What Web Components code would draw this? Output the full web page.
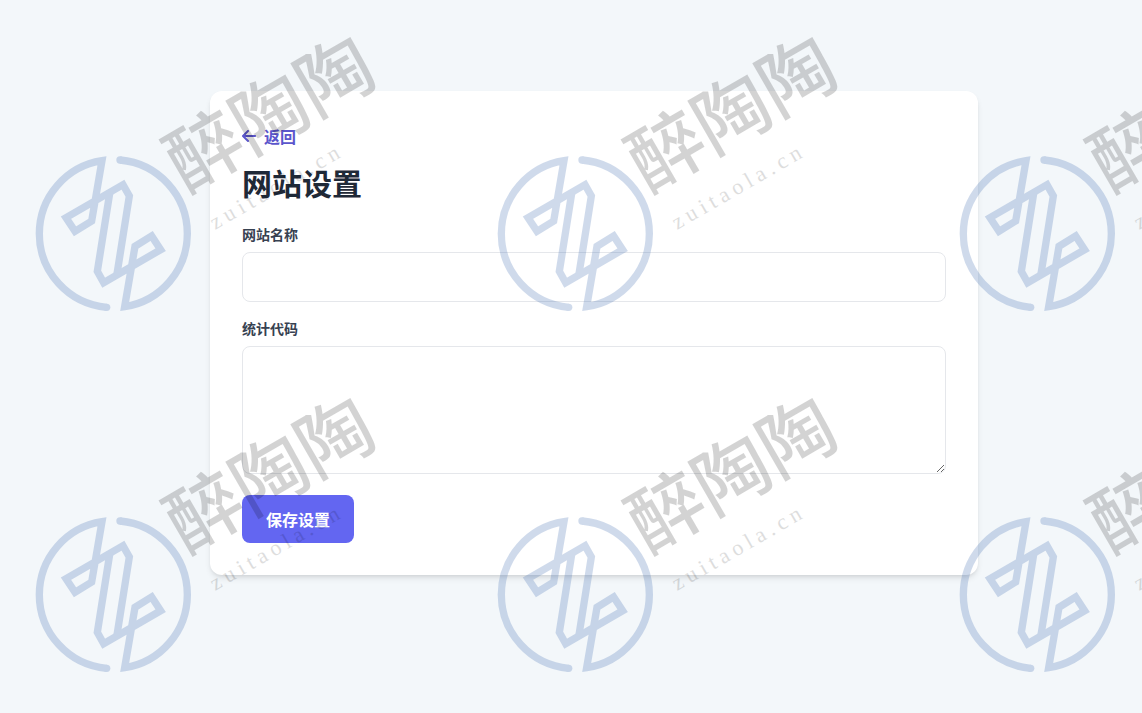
<!DOCTYPE html>
<html lang="zh-CN">
<head>
<meta charset="utf-8">
<meta name="viewport" content="width=device-width, initial-scale=1">
<title>网站设置</title>
<style>
  body { margin: 0; background: #f3f7fa; color: #1f2937; font: 16px/24px "Noto Sans CJK SC", sans-serif; }
</style>
</head>
<body>
<settings-page>
  <settings-card>
    <back-link>返回</back-link>
    <page-title>网站设置</page-title>
    <form-field label="网站名称" name="site-name"></form-field>
    <form-field label="统计代码" name="analytics" multiline></form-field>
    <primary-button>保存设置</primary-button>
  </settings-card>
  <watermark-layer slot="overlay" tiles="6"></watermark-layer>
</settings-page>

<script>
function define(name, html, setup) {
  const template = document.createElement('template');
  template.innerHTML = '<style>*{box-sizing:border-box}</style>' + html;
  customElements.define(name, class extends HTMLElement {
    constructor() {
      super();
      this.attachShadow({ mode: 'open' }).append(template.content.cloneNode(true));
    }
    connectedCallback() { if (setup) setup(this, this.shadowRoot); }
  });
}

define('settings-page', `
  <style>
    :host { display: block; position: relative; min-height: 100vh; overflow: hidden; box-sizing: border-box; }
    main { display: flex; justify-content: center; padding: 91px 0 48px 46px; }
  </style>
  <main><slot></slot></main><slot name="overlay"></slot>`);

define('settings-card', `
  <style>
    :host { display: block; box-sizing: border-box; width: 100%; max-width: 768px; padding: 32px;
      background: #fff; border-radius: 12px;
      box-shadow: 0 4px 6px -1px rgba(0,0,0,.1), 0 2px 4px -2px rgba(0,0,0,.1); }
  </style>
  <slot></slot>`);

define('back-link', `
  <style>
    :host { display: block; margin-bottom: 16px; }
    a { display: flex; align-items: center; gap: 8px; padding-top: 1px; color: #5b56cc; font-weight: 700; text-decoration: none; }
    svg { width: 14px; height: 16px; }
  </style>
  <a href="#"><svg viewBox="0 0 448 512" fill="currentColor" aria-hidden="true"><path d="M9.400 233.400c-12.500 12.500-12.500 32.800 0 45.300l160 160c12.500 12.500 32.800 12.500 45.300 0s12.500-32.800 0-45.300L109.200 288H416c17.700 0 32-14.300 32-32s-14.300-32-32-32H109.300l105.300-105.400c12.500-12.500 12.500-32.800 0-45.300s-32.800-12.500-45.300 0l-160 160z"/></svg><slot></slot></a>`);

define('page-title', `
  <style>
    :host { display: block; margin-bottom: 24px; }
    h1 { margin: 0; font-size: 30px; line-height: 36px; font-weight: 700; color: #1f2937; }
  </style>
  <h1><slot></slot></h1>`);

define('form-field', `
  <style>
    :host { display: block; margin-bottom: 16px; }
    label { display: block; margin-bottom: 8px; font-size: 14px; line-height: 20px; font-weight: 700; color: #374151; }
    input, textarea { display: block; width: 100%; margin: 0; padding: 12px; border: 1px solid #e5e7eb;
      border-radius: 8px; background: #fff; color: inherit; font: inherit; outline: none; }
    input { height: 50px; }
    textarea { height: 128px; resize: vertical; }
    :host([multiline]) { margin-bottom: 21px; }
  </style>
  <label for="control"></label>`,
  (host, root) => {
    if (root.getElementById('control')) return;
    root.querySelector('label').textContent = host.getAttribute('label');
    const control = document.createElement(host.hasAttribute('multiline') ? 'textarea' : 'input');
    control.id = 'control';
    control.name = host.getAttribute('name');
    root.append(control);
  });

define('primary-button', `
  <style>
    :host { display: block; }
    button { display: block; padding: 12px 24px; border: 0; border-radius: 8px; background: #6366f1; color: #fff;
      font: inherit; font-weight: 700; cursor: pointer; }
  </style>
  <button type="button"><slot></slot></button>`);

define('watermark-layer', `
  <style>
    :host { position: absolute; inset: 0; overflow: hidden; pointer-events: none; display: block; }
    div { display: grid; grid-template-columns: repeat(3, 462px); grid-auto-rows: 361px; }
  </style>
  <div></div>`,
  (host, root) => {
    const grid = root.querySelector('div');
    for (let i = grid.children.length; i < Number(host.getAttribute('tiles')); i++) {
      grid.append(document.createElement('watermark-tile'));
    }
  });

define('watermark-tile', `
  <style>
    :host { display: block; }
    svg { display: block; overflow: visible; }
    .emblem { fill: none; stroke: #3b69b0; stroke-width: 22; opacity: .24; }
    .name { font: 500 75px "Noto Sans CJK SC", sans-serif; fill: #000; opacity: .17; }
    .site { font: 22px "Liberation Serif", serif; letter-spacing: 5px; fill: #000; opacity: .13; }
  </style>
  <svg width="462" height="361" viewBox="0 0 462 361">
    <svg x="28" y="140" width="180" height="180" viewBox="0 0 540 540">
      <g class="emblem">
        <path d="M236 502A222 222 0 0 1 34 281A222 222 0 0 1 222 62L191 243L141 274L114 233L285 134L304 168L266 408"/>
        <path transform="rotate(180 256 281)" d="M236 502A222 222 0 0 1 34 281A222 222 0 0 1 222 62L191 243L141 274L114 233L285 134L304 168L266 408"/>
        <g fill="#3b69b0" stroke="none"><circle cx="236" cy="502" r="11"/><circle cx="276" cy="60" r="11"/></g>
      </g>
    </svg>
    <text class="name" transform="translate(186 193) rotate(-30)">醉陶陶</text>
    <text class="site" transform="translate(215 230) rotate(-30)">zuitaola.cn</text>
  </svg>`);
</script>
</body>
</html>
